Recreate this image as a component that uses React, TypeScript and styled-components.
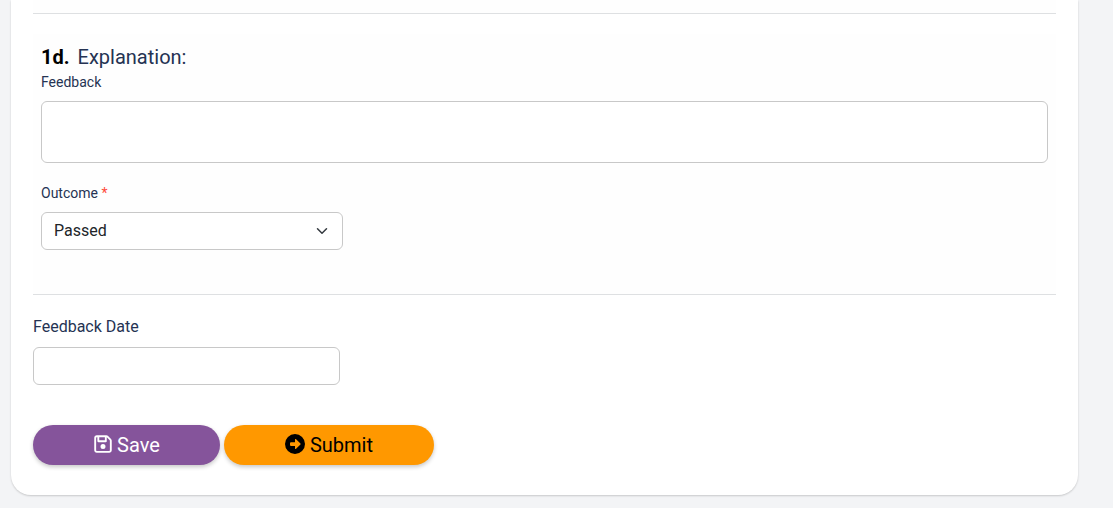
import React, { useState } from "react";
import styled, { createGlobalStyle } from "styled-components";
import { FaRegFloppyDisk, FaCircleRight } from "react-icons/fa6";

const GlobalStyle = createGlobalStyle`
  *, *::before, *::after { box-sizing: border-box; }
  body {
    margin: 0;
    background: #f3f4f6;
    color: #253353;
    font-family: Roboto, "Liberation Sans", sans-serif;
    font-size: 16px;
    line-height: 24px;
  }
`;

const Page = styled.main`
  padding: 0 35px 12px 11px;
`;

const Card = styled.form`
  padding: 0 22px 30px;
  background: #fff;
  border-radius: 0 0 20px 20px;
  box-shadow: 0 1px 2px rgba(0, 0, 0, 0.18);
`;

const PreviousSection = styled.div`
  height: 14px;
  background: #fefefe;
  border-bottom: 1px solid #dee0e2;
`;

const Section = styled.section`
  margin-top: 20px;
  padding: 8px 8px 44px;
  background: #fefefe;
  border-bottom: 1px solid #dee0e2;
`;

const Heading = styled.h2`
  display: flex;
  gap: 8px;
  margin: 0;
  font-size: 20px;
  font-weight: 400;
  line-height: 30px;
`;

const Number = styled.strong`
  color: #000;
  font-weight: 700;
`;

const Field = styled.div<{ $top?: number }>`
  display: flex;
  flex-direction: column;
  align-items: flex-start;
  gap: 8px;
  margin-top: ${(p) => p.$top ?? 0}px;
`;

const Label = styled.label<{ $small?: boolean }>`
  font-size: ${(p) => (p.$small ? 14 : 16)}px;
  line-height: ${(p) => (p.$small ? 21 : 24)}px;
`;

const Required = styled.span`
  color: #ff4a3a;
`;

const controlStyle = `
  border: 1px solid #c8c8c8;
  border-radius: 6px;
  background-color: #fff;
  color: #212529;
  font: inherit;
  padding: 6px 12px;
`;

const TextArea = styled.textarea`
  ${controlStyle}
  display: block;
  width: 100%;
  height: 62px;
  resize: none;
`;

const SelectWrap = styled.div`
  position: relative;
  width: 302px;
  max-width: 100%;
`;

const Select = styled.select`
  ${controlStyle}
  appearance: none;
  display: block;
  width: 100%;
  height: 38px;
`;

const Chevron = styled.svg`
  position: absolute;
  top: 13px;
  right: 15px;
  width: 12px;
  height: 12px;
  pointer-events: none;
`;

const Input = styled.input`
  ${controlStyle}
  width: 307px;
  max-width: 100%;
  height: 38px;
`;

const Actions = styled.div`
  display: flex;
  flex-wrap: wrap;
  gap: 4px;
  margin-top: 40px;
`;

const Button = styled.button<{ $kind: "save" | "submit" }>`
  display: inline-flex;
  align-items: center;
  justify-content: center;
  gap: ${(p) => (p.$kind === "save" ? 4 : 5)}px;
  width: ${(p) => (p.$kind === "save" ? 187 : 210)}px;
  height: 40px;
  padding: 0;
  border: 0;
  border-radius: 20px;
  background: ${(p) => (p.$kind === "save" ? "#85549b" : "#ff9800")};
  color: ${(p) => (p.$kind === "save" ? "#fff" : "#000")};
  box-shadow: 0 2px 4px rgba(0, 0, 0, 0.22);
  font: inherit;
  font-size: 20px;
  cursor: pointer;

  svg {
    margin-bottom: 2px;
  }
`;

export default function App() {
  const [outcome, setOutcome] = useState("passed");
  return (
    <>
      <GlobalStyle />
      <Page>
        <Card onSubmit={(e) => e.preventDefault()}>
          <PreviousSection />
          <Section>
            <Heading>
              <Number>1d.</Number>
              <span>Explanation:</span>
            </Heading>
            <Field>
              <Label $small htmlFor="feedback">Feedback</Label>
              <TextArea id="feedback" />
            </Field>
            <Field $top={20}>
              <Label $small htmlFor="outcome">
                Outcome <Required>*</Required>
              </Label>
              <SelectWrap>
                <Select
                  id="outcome"
                  required
                  value={outcome}
                  onChange={(e) => setOutcome(e.target.value)}
                >
                  <option value="passed">Passed</option>
                  <option value="failed">Failed</option>
                </Select>
                <Chevron viewBox="0 0 16 16" aria-hidden="true">
                  <path
                    d="m2 5 6 6 6-6"
                    fill="none"
                    stroke="#343a40"
                    strokeWidth="2"
                    strokeLinecap="round"
                    strokeLinejoin="round"
                  />
                </Chevron>
              </SelectWrap>
            </Field>
          </Section>
          <Field $top={20}>
            <Label htmlFor="date">Feedback Date</Label>
            <Input id="date" type="text" />
          </Field>
          <Actions>
            <Button type="button" $kind="save">
              <FaRegFloppyDisk aria-hidden="true" />
              Save
            </Button>
            <Button type="submit" $kind="submit">
              <FaCircleRight aria-hidden="true" />
              Submit
            </Button>
          </Actions>
        </Card>
      </Page>
    </>
  );
}
